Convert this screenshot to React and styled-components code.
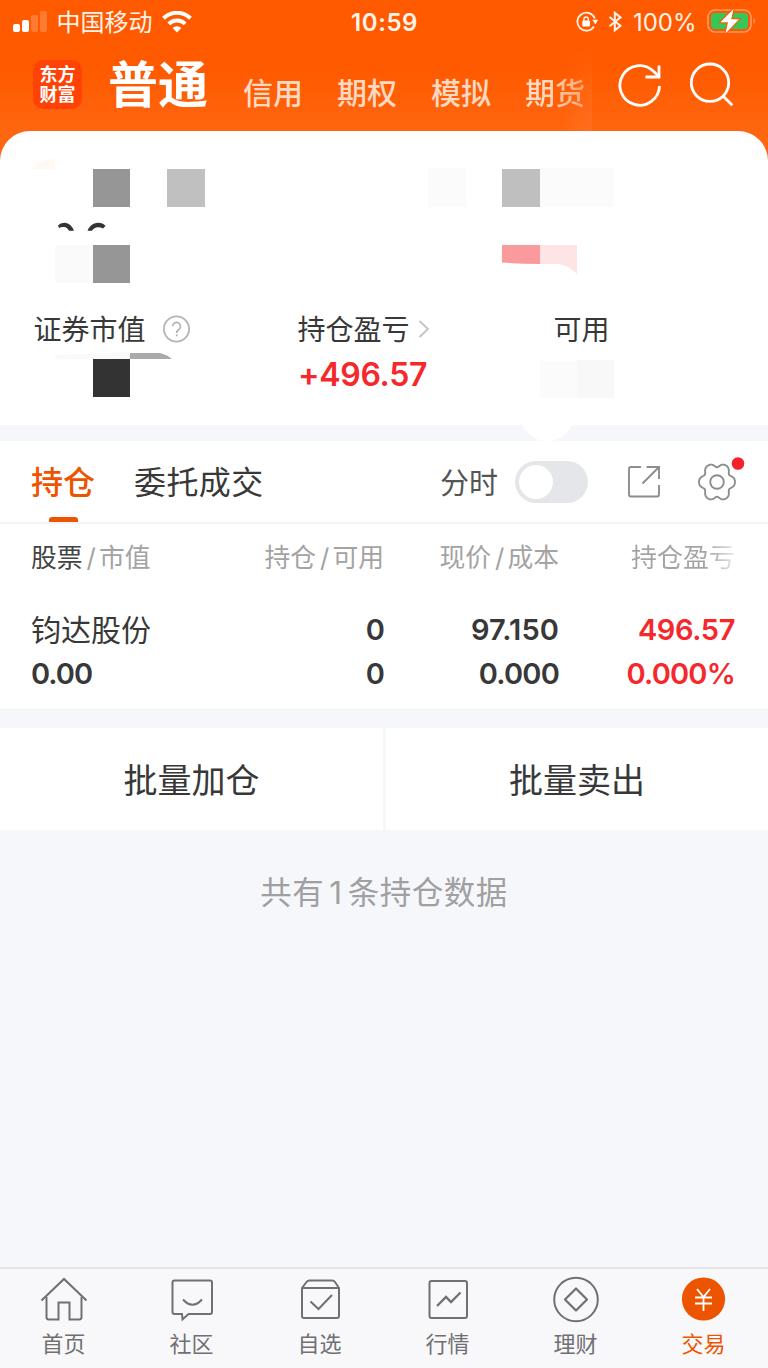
import React from "react";
import styled, { createGlobalStyle } from "styled-components";

const Global = createGlobalStyle`
  * { box-sizing: border-box; }
  body { margin: 0; background: #f6f7fa; font-family: Inter, "Noto Sans CJK SC", sans-serif; }
  svg { display: block; flex: none; }
`;

const Screen = styled.div`
  width: 768px;
  height: 1368px;
  display: flex;
  flex-direction: column;
  background: #f6f7fa;
  color: #383838;
  overflow: hidden;
`;

const Label = styled.span`
  display: block;
  flex: none;
  white-space: nowrap;
  font-size: ${(p) => p.$size}px;
  line-height: ${(p) => p.$line || 40}px;
  font-weight: ${(p) => p.$weight || 400};
  letter-spacing: ${(p) => p.$track || 0}px;
  color: ${(p) => p.$color || "inherit"};
`;

const Header = styled.header`
  height: 166px;
  flex: none;
  background: linear-gradient(#ff5a00 0, #ff5a00 70px, #ff6610 132px, #ff6a14 166px);
  color: #fff;
`;

const StatusBar = styled.div`
  height: 44px;
  display: grid;
  grid-template-columns: 1fr auto 1fr;
  align-items: center;
  padding: 0 12px 0 13px;
  color: #fff3ea;
`;

const StatusText = styled(Label)`
  padding-top: 1px;
`;

const StatusGroup = styled.div`
  display: flex;
  align-items: center;
  justify-content: ${(p) => (p.$end ? "flex-end" : "flex-start")};
  gap: ${(p) => p.$gap}px;
`;

const NavBar = styled.nav`
  height: 88px;
  display: flex;
  align-items: center;
  padding: 0 33px;
`;

const Logo = styled.div`
  flex: none;
  width: 49px;
  height: 49px;
  margin-top: -7px;
  border-radius: 10px;
  background: #ff4206;
  display: flex;
  flex-direction: column;
  align-items: center;
  justify-content: center;
`;

const NavTabs = styled.div`
  position: relative;
  flex: none;
  display: flex;
  height: 88px;
  width: 510px;
  padding-left: 26px;
  align-items: flex-start;

  &::after {
    content: "";
    position: absolute;
    top: 0;
    right: 0;
    width: 34px;
    height: 88px;
    background: linear-gradient(90deg, rgba(255, 255, 255, 0), rgba(255, 255, 255, 0.06));
    mask-image: linear-gradient(transparent, #000 60%);
  }
`;

const NavCurrent = styled(Label)`
  padding-top: 10.5px;
  width: 135px;
`;

const NavItem = styled(Label)`
  width: 94px;
  padding-top: 29px;
  color: #ffd9c2;
`;

const FadingItem = styled(NavItem)`
  color: transparent;
  width: 66px;
  background: linear-gradient(90deg, #ffd9c2 35%, rgba(255, 190, 150, 0.75) 85%);
  background-clip: text;
  -webkit-background-clip: text;
`;

const NavActions = styled.div`
  display: flex;
  gap: 26px;
  margin-top: -6px;
  margin-left: 25.5px;
`;

const Summary = styled.section`
  position: relative;
  flex: none;
  height: 294px;
  margin-top: -35px;
  padding: 178px 0 0 34px;
  border-radius: 30px 30px 0 0;
  background: #fff;
`;

const Mosaic = styled.svg`
  position: absolute;
  left: 0;
  top: 0;
  pointer-events: none;
`;

const SummaryGrid = styled.div`
  display: grid;
  grid-template-columns: 264px 256px 1fr;
`;

const Metric = styled.div`
  display: flex;
  flex-direction: column;
  gap: 5px;
`;

const MetricTitle = styled.div`
  display: flex;
  align-items: flex-start;
  gap: ${(p) => p.$gap}px;

  svg { margin-top: ${(p) => p.$iconTop}px; }
`;

const MetricName = styled(Label)`
  padding-top: 1px;
  margin-left: -0.5px;
`;

const Panel = styled.section`
  flex: none;
  height: 269px;
  margin-top: 16px;
  background: #fff;
  border-bottom: 1px solid #f1f2f4;
`;

const Tabs = styled.div`
  display: flex;
  gap: 39px;
  height: 83px;
  padding: 0 23px 0 31px;
  border-bottom: 2px solid #f3f4f5;
`;

const Tab = styled.div`
  display: flex;
  flex-direction: column;
  align-items: center;
  justify-content: space-between;
  padding-top: 22px;
`;

const TabMark = styled.i`
  width: 29px;
  height: 5px;
  border-radius: 3px 3px 0 0;
  background: #ed5400;
`;

const TabTools = styled.div`
  flex: 1;
  display: flex;
  align-items: center;
  justify-content: flex-end;
`;

const ToolName = styled(Label)`
  padding-top: 4px;
`;

const Toggle = styled.div`
  width: 73px;
  height: 42px;
  padding: 4px;
  margin: 0 39px 0 17px;
  border-radius: 21px;
  background: #e4e6e9;
`;

const Knob = styled.div`
  width: 34px;
  height: 34px;
  border-radius: 50%;
  background: #fff;
`;

const Row = styled.div`
  display: grid;
  grid-template-columns: 160px 193px 175px 176px;
  padding-left: 31px;
  height: ${(p) => p.$height}px;
  align-items: center;
`;

const Holding = styled.div`
  padding-top: 17px;
`;

const Cell = styled.div`
  display: flex;
  justify-content: ${(p) => (p.$left ? "flex-start" : "flex-end")};
`;

const ColumnTitle = styled(Label)`
  color: #a3a3a3;
  b { font-weight: 400; color: #444; }
  i { font-style: normal; margin: 0 3px 0 4px; }
`;

const FadeTitle = styled(ColumnTitle)`
  color: transparent;
  background: linear-gradient(90deg, #a3a3a3 72%, #e8e8e8 100%);
  background-clip: text;
  -webkit-background-clip: text;
`;

const Actions = styled.div`
  flex: none;
  display: grid;
  grid-template-columns: 383px 382px;
  gap: 3px;
  height: 102px;
  margin-top: 18px;
`;

const ActionButton = styled.button`
  display: flex;
  align-items: center;
  justify-content: center;
  border: 0;
  padding: 4px 0 0;
  background: #fff;
  color: #383838;
  font-family: inherit;
`;

const Note = styled.div`
  flex: 1;
  display: flex;
  justify-content: center;
  padding-top: 43px;

  em { font-style: normal; margin: 0 5px; }
`;

const BottomBar = styled.footer`
  flex: none;
  height: 101px;
  display: grid;
  grid-template-columns: repeat(6, 128px);
  border-top: 2px solid #e5e6e8;
  background: #f8f8fb;
`;

const BottomItem = styled.div`
  display: flex;
  flex-direction: column;
  align-items: center;
  padding: 7px 1px 0 0;
  color: ${(p) => (p.$active ? "#ed5400" : "#707072")};
`;

const Signal = () => (
  <svg width="34" height="22" viewBox="0 0 34 22" fill="#fff">
    <rect x="0" y="13" width="7" height="8" rx="2" />
    <rect x="9" y="9" width="7" height="12" rx="2" />
    <rect x="18" y="4" width="7" height="17" rx="2" opacity=".2" />
    <rect x="27" y="0" width="7" height="21" rx="2" opacity=".2" />
  </svg>
);

const Wifi = () => (
  <svg width="30" height="22" viewBox="0 0 30 22" fill="none" stroke="#fff" strokeWidth="4">
    <path d="M1.500 7.300a19.300 19.300 0 0 1 27 0" />
    <path d="M6.800 12.900a11.700 11.700 0 0 1 16.400 0" />
    <path d="M15 21.500l-4.400-4.400a6.300 6.300 0 0 1 8.800 0z" fill="#fff" stroke="none" />
  </svg>
);

const RotationLock = () => (
  <svg width="22" height="22" viewBox="0 0 22 22" fill="none" stroke="#fff3ea" strokeWidth="1.800">
    <path d="M18 15.500A9 9 0 1 1 18.800 7.500" />
    <path d="M16.300 8.800h5.700l-2.600 4.600z" fill="#fff" stroke="none" />
    <rect x="6.300" y="9.500" width="7.600" height="6" rx="1" fill="#fff" stroke="none" />
    <path d="M7.900 10V8.200a2.200 2.200 0 0 1 4.400 0V10" strokeWidth="1.400" />
  </svg>
);

const Bluetooth = () => (
  <svg width="14" height="22" viewBox="0 0 14 22" fill="none" stroke="#fff3ea" strokeWidth="2">
    <path d="M1.500 6l11 8.800-5.700 4.600V1.800L12.500 6.400l-11 8.800" />
  </svg>
);

const Battery = () => (
  <svg width="49" height="26" viewBox="0 0 49 26">
    <rect x="1" y="1" width="43" height="22" rx="7" fill="none" stroke="#ff9b68" strokeWidth="1.600" />
    <rect x="4" y="4" width="37" height="16" rx="4" fill="#35c759" />
    <path d="M46.500 9c2 .8 2 5 0 6z" fill="#ff9b68" />
    <path d="M26.500 0L13.500 13.200h7.500L18.500 24.500 32 10.200h-7.800z" fill="#fff" stroke="#ff5a00" strokeWidth="2.200" paintOrder="stroke" />
  </svg>
);

const Refresh = () => (
  <svg width="45" height="46" viewBox="0 0 45 46" fill="none" stroke="#fff" strokeWidth="2.800">
    <path d="M41.500 24a19.800 19.800 0 1 1-6-14.800l5 5" />
    <path d="M41 3.500v11.500H27.500" />
  </svg>
);

const Search = () => (
  <svg width="45" height="46" viewBox="0 0 45 46" fill="none" stroke="#fff" strokeWidth="2.800">
    <circle cx="21" cy="20.700" r="18.700" />
    <path d="M34 34l9.300 9.300" />
  </svg>
);

const Help = () => (
  <svg width="28" height="28" viewBox="0 0 28 28" fill="none" stroke="#b4b4b4" strokeWidth="1.800">
    <circle cx="13.500" cy="14" r="12.600" />
    <path d="M9.700 11.300a3.900 3.900 0 1 1 6.400 3c-1.700 1.200-2.400 1.900-2.400 3.700M13.700 19.300v2" strokeWidth="1.700" />
  </svg>
);

const Chevron = () => (
  <svg width="12" height="18" viewBox="0 0 12 18" fill="none" stroke="#c4c4c4" strokeWidth="1.900">
    <path d="M1.500 1l8.500 8-8.500 8" />
  </svg>
);

const Share = () => (
  <svg width="34" height="34" viewBox="0 0 34 34" fill="none" stroke="#8d8d8d" strokeWidth="1.900">
    <path d="M14 2H4A2 2 0 0 0 2 4V29.500a2 2 0 0 0 2 2h26a2 2 0 0 0 2-2V20" />
    <path d="M19.500 2h12.500V14M32 2L15.500 18.500" />
  </svg>
);

const gearOutline = Array.from({ length: 120 }, (_, i) => {
  const a = (i / 120) * Math.PI * 2;
  const r = 16.3 + 2 * Math.cos(6 * a) - 0.35 * Math.cos(12 * a);
  return `${(20 + r * Math.cos(a)).toFixed(2)},${(25 + r * Math.sin(a) * 1.06).toFixed(2)}`;
}).join(" ");

const GearIcon = styled.svg`
  margin-left: 36px;
`;

const Gear = () => (
  <GearIcon width="48" height="50" viewBox="0 0 48 50" fill="none" stroke="#8d8d8d" strokeWidth="1.900">
    <polygon points={gearOutline} strokeLinejoin="round" />
    <circle cx="20" cy="25" r="6.800" />
    <circle cx="41" cy="6.500" r="6.300" fill="#f5222a" stroke="none" />
  </GearIcon>
);

const Redaction = () => (
  <Mosaic width="768" height="316" viewBox="0 131 768 316">
    <path d="M31 169q8-10 24-10v10z" fill="#fff9f3" />
    <path d="M93 169h37v38H93zM93 245h37v38H93z" fill="#969696" />
    <path d="M167 169h38v38h-38z" fill="#c0c0c0" />
    <path d="M428 168h38v39h-38zM540 168h74v39h-74z" fill="#fbfbfb" />
    <path d="M502 169h38v38h-38z" fill="#bfbfbf" />
    <path d="M55 245h38v38H55z" fill="#fafafa" />
    <path d="M58 225.500q2.500-3 7-2.700 6 .7 9 8h-5q-2-3.500-5-3.700-3-.2-5 .8zM105.500 226q-3-3.500-8-3.200-7 .7-10 8h4.500q2-3.300 6-3.500 3 0 5 1.200z" fill="#333" />
    <path d="M502 245h38v19q-20 0-38-1.500z" fill="#fb9a9c" />
    <path d="M540 245h37v29q-10-10-20-10h-17z" fill="#ffe4e5" />
    <path d="M55 355l75-3v7H55z" fill="#fafafa" />
    <path d="M130 353h30q8 2 12 6h-42z" fill="#aaa" />
    <path d="M93 359h37v38H93z" fill="#333" />
    <path d="M540 361h37v37h-37z" fill="#fbfbfb" />
    <path d="M577 360h37v38h-37z" fill="#f8f8f8" />
    <path d="M522 425h50q-9 16-25 16t-25-16z" fill="#fff" />
  </Mosaic>
);

const bottomIcons = {
  home: <><path d="M1.500 24.500L24 3l22.500 21.500" /><path d="M6.500 21v20q0 2.500 2.500 2.500h9.500V26.500h11v17H39q2.500 0 2.500-2.500V21" /></>,
  community: <><path d="M6.500 4.500h35.500q2 0 2 2v29.500q0 2-2 2H20.500l-6 5.500-.5-5.500H6.500q-2 0-2-2V6.500q0-2 2-2z" /><path d="M15 23.500q9.500 10.500 19 0" /></>,
  favorites: <><path d="M6 12l4.500-6q1-1.500 3-1.500h22.500q2 0 3 1.500l4 6v28q0 2-2 2H8q-2 0-2-2zM6 12h37" /><path d="M14.500 25.500l8 7.500L36 19" /></>,
  market: <><rect x="5.500" y="5" width="37.500" height="37" rx="2" /><path d="M13 30l9-9 5 5 9.500-9.500" strokeWidth="2.300" /></>,
  wealth: <><circle cx="24" cy="23.500" r="21.800" /><path d="M24 12.500l11 11-11 11-11-11z" strokeLinejoin="round" strokeWidth="2.200" /></>,
  trade: <><circle cx="23.500" cy="23" r="21.600" fill="#ed5400" stroke="none" /><g stroke="#fff" strokeWidth="1.800"><path d="M17 13l6.500 8 6.500-8M23.500 21v14M15 21.500h17M15 27.500h17" /></g></>,
};

const BottomIcon = ({ name }) => (
  <svg width="48" height="48" viewBox="0 0 48 48" fill="none" stroke="currentColor" strokeWidth="2">
    {bottomIcons[name]}
  </svg>
);

const bottomItems = [
  ["home", "首页"],
  ["community", "社区"],
  ["favorites", "自选"],
  ["market", "行情"],
  ["wealth", "理财"],
  ["trade", "交易"],
];

export default function App() {
  return (
    <Screen>
      <Global />
      <Header>
        <StatusBar>
          <StatusGroup $gap={9.5}>
            <Signal />
            <StatusText $size={24}>中国移动</StatusText>
            <Wifi />
          </StatusGroup>
          <StatusText $size={24} $weight={600} $track={0.6}>10:59</StatusText>
          <StatusGroup $end $gap={10.5}>
            <RotationLock />
            <Bluetooth />
            <StatusText $size={24} $track={0}>100%</StatusText>
            <Battery />
          </StatusGroup>
        </StatusBar>
        <NavBar>
          <Logo>
            <Label $size={18} $line={20} $weight={700}>东方</Label>
            <Label $size={18} $line={20} $weight={700}>财富</Label>
          </Logo>
          <NavTabs>
            <NavCurrent $size={50} $line={60} $weight={700}>普通</NavCurrent>
            <NavItem $size={30} $weight={500}>信用</NavItem>
            <NavItem $size={30} $weight={500}>期权</NavItem>
            <NavItem $size={30} $weight={500}>模拟</NavItem>
            <FadingItem $size={30} $weight={500}>期货</FadingItem>
          </NavTabs>
          <NavActions>
            <Refresh />
            <Search />
          </NavActions>
        </NavBar>
      </Header>

      <Summary>
        <SummaryGrid>
          <Metric>
            <MetricTitle $gap={17} $iconTop={6}>
              <MetricName $size={28}>证券市值</MetricName>
              <Help />
            </MetricTitle>
          </Metric>
          <Metric>
            <MetricTitle $gap={8} $iconTop={11}>
              <MetricName $size={28}>持仓盈亏</MetricName>
              <Chevron />
            </MetricTitle>
            <Label $size={32} $weight={600} $track={-0.3} $color="#f5282d">+496.57</Label>
          </Metric>
          <Metric>
            <MetricName $size={28}>可用</MetricName>
          </Metric>
        </SummaryGrid>
        <Redaction />
      </Summary>

      <Panel>
        <Tabs>
          <Tab>
            <Label $size={32} $weight={500} $color="#ed5400">持仓</Label>
            <TabMark />
          </Tab>
          <Tab>
            <Label $size={32} $track={0.4}>委托成交</Label>
          </Tab>
          <TabTools>
            <ToolName $size={29} $color="#555">分时</ToolName>
            <Toggle><Knob /></Toggle>
            <Share />
            <Gear />
          </TabTools>
        </Tabs>
        <Row $height={67}>
          <Cell $left><ColumnTitle $size={25.8}><b>股票</b><i>/</i>市值</ColumnTitle></Cell>
          <Cell><ColumnTitle $size={25.8}>持仓<i>/</i>可用</ColumnTitle></Cell>
          <Cell><ColumnTitle $size={25.8}>现价<i>/</i>成本</ColumnTitle></Cell>
          <Cell><FadeTitle $size={26}>持仓盈亏</FadeTitle></Cell>
        </Row>
        <Holding>
          <Row $height={44}>
            <Cell $left><Label $size={30}>钧达股份</Label></Cell>
            <Cell><Label $size={29} $weight={600} $track={-0.8}>0</Label></Cell>
            <Cell><Label $size={29} $weight={600} $track={0.1}>97.150</Label></Cell>
            <Cell><Label $size={29} $weight={600} $track={-0.4} $color="#f5282d">496.57</Label></Cell>
          </Row>
          <Row $height={44}>
            <Cell $left><Label $size={29} $weight={600} $track={-1}>0.00</Label></Cell>
            <Cell><Label $size={29} $weight={600} $track={-0.8}>0</Label></Cell>
            <Cell><Label $size={29} $weight={600} $track={-0.8}>0.000</Label></Cell>
            <Cell><Label $size={29} $weight={600} $track={-0.8} $color="#f5282d">0.000%</Label></Cell>
          </Row>
        </Holding>
      </Panel>

      <Actions>
        <ActionButton><Label $size={34}>批量加仓</Label></ActionButton>
        <ActionButton><Label $size={34}>批量卖出</Label></ActionButton>
      </Actions>

      <Note><Label $size={31.5} $track={0.5} $color="#a0a0a2">共有<em>1</em>条持仓数据</Label></Note>

      <BottomBar>
        {bottomItems.map(([name, text]) => (
          <BottomItem key={name} $active={name === "trade"}>
            <BottomIcon name={name} />
            <Label $size={22} $line={40}>{text}</Label>
          </BottomItem>
        ))}
      </BottomBar>
    </Screen>
  );
}
